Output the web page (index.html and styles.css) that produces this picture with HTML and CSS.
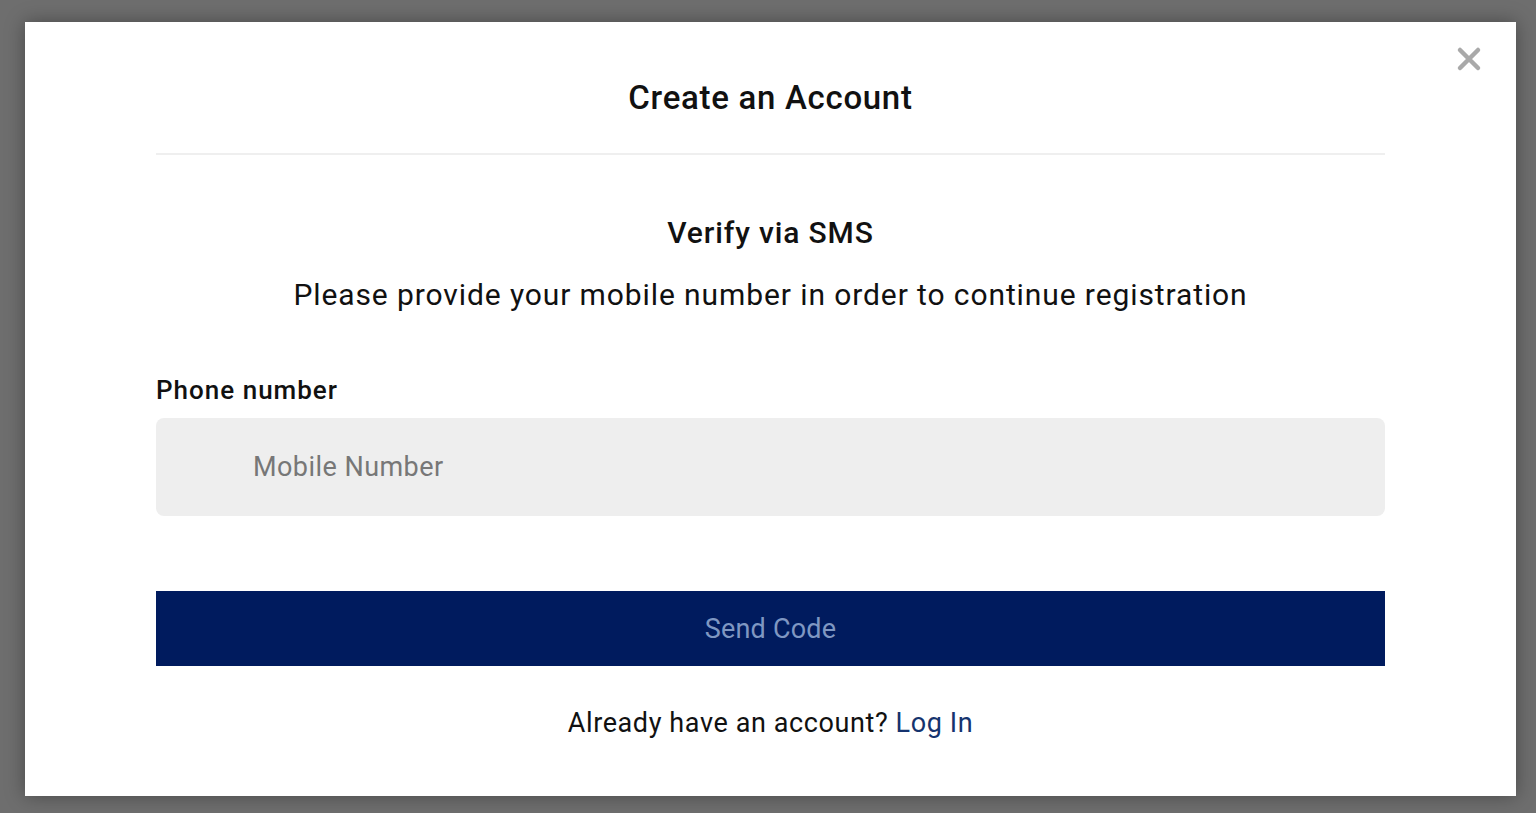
FILE: index.html
```html
<!DOCTYPE html>
<html lang="en">
<head>
<meta charset="utf-8">
<title>Create an Account</title>
<link rel="stylesheet" href="styles.css">
</head>
<body>
<div class="overlay">
  <div class="modal">
    <button class="close" aria-label="Close">
      <svg width="26" height="26" viewBox="0 0 26 26"><path d="M4 4L22 22M22 4L4 22" stroke="#a9a9a9" stroke-width="4.5" stroke-linecap="round"/></svg>
    </button>
    <div class="content">
      <h1 class="title">Create an Account</h1>
      <hr class="divider">
      <h2 class="subtitle">Verify via SMS</h2>
      <p class="lead">Please provide your mobile number in order to continue registration</p>
      <label class="label" for="phone">Phone number</label>
      <div class="input"><input id="phone" type="tel" placeholder="Mobile Number"></div>
      <button class="send">Send Code</button>
      <p class="login">Already have an account? <a href="#">Log In</a></p>
    </div>
  </div>
</div>
</body>
</html>
```

FILE: styles.css
```css
* { box-sizing: border-box; }
html, body { margin: 0; height: 100%; }
body {
  font-family: Roboto, "Noto Sans", sans-serif;
  background: #6e6e6e;
}
.overlay {
  height: 813px;
  padding: 22px 20px 17px 25px;
  display: flex;
}
.modal {
  position: relative;
  flex: 1;
  background: #fff;
  box-shadow: 0 0 18px rgba(0,0,0,0.35);
  display: flex;
  justify-content: center;
}
.close {
  position: absolute;
  top: 24px;
  right: 34px;
  background: none;
  border: 0;
  padding: 0;
  cursor: pointer;
}
.close svg { display: block; }
.content {
  width: 1229px;
  display: flex;
  flex-direction: column;
  align-items: stretch;
  padding-top: 56px;
}
.title {
  margin: 0;
  text-align: center;
  font-size: 33px;
  font-weight: 500;
  color: #111;
  line-height: 40px;
  letter-spacing: 0.7px;
}
.divider {
  margin: 35px 0 0;
  border: 0;
  border-top: 2px solid #efefef;
}
.subtitle {
  margin: 58px 0 0;
  text-align: center;
  font-size: 30px;
  font-weight: 500;
  color: #111;
  line-height: 40px;
  letter-spacing: 0.85px;
}
.lead {
  margin: 22px 0 0;
  text-align: center;
  font-size: 30px;
  color: #111;
  line-height: 40px;
  letter-spacing: 0.9px;
}
.label {
  margin-top: 58px;
  font-size: 26px;
  font-weight: 500;
  color: #111;
  line-height: 34px;
  letter-spacing: 1px;
}
.input {
  margin-top: 11px;
  height: 98px;
  background: #eeeeee;
  border-radius: 8px;
  display: flex;
  align-items: center;
  padding-left: 95px;
}
.input input {
  border: 0;
  background: transparent;
  outline: none;
  font: inherit;
  font-size: 27px;
  letter-spacing: 0.45px;
  color: #333;
  width: 100%;
  padding: 0 2px;
}
.input input::placeholder { color: #777; }
.send {
  margin-top: 75px;
  height: 75px;
  border: 0;
  background: #001b5e;
  color: #7f97c2;
  font: inherit;
  font-size: 27px;
  letter-spacing: 0.2px;
  cursor: pointer;
}
.login {
  margin: 39px 0 0;
  text-align: center;
  font-size: 27px;
  color: #111;
  line-height: 36px;
  letter-spacing: 0.6px;
}
.login a {
  color: #15336e;
  text-decoration: none;
}
```
